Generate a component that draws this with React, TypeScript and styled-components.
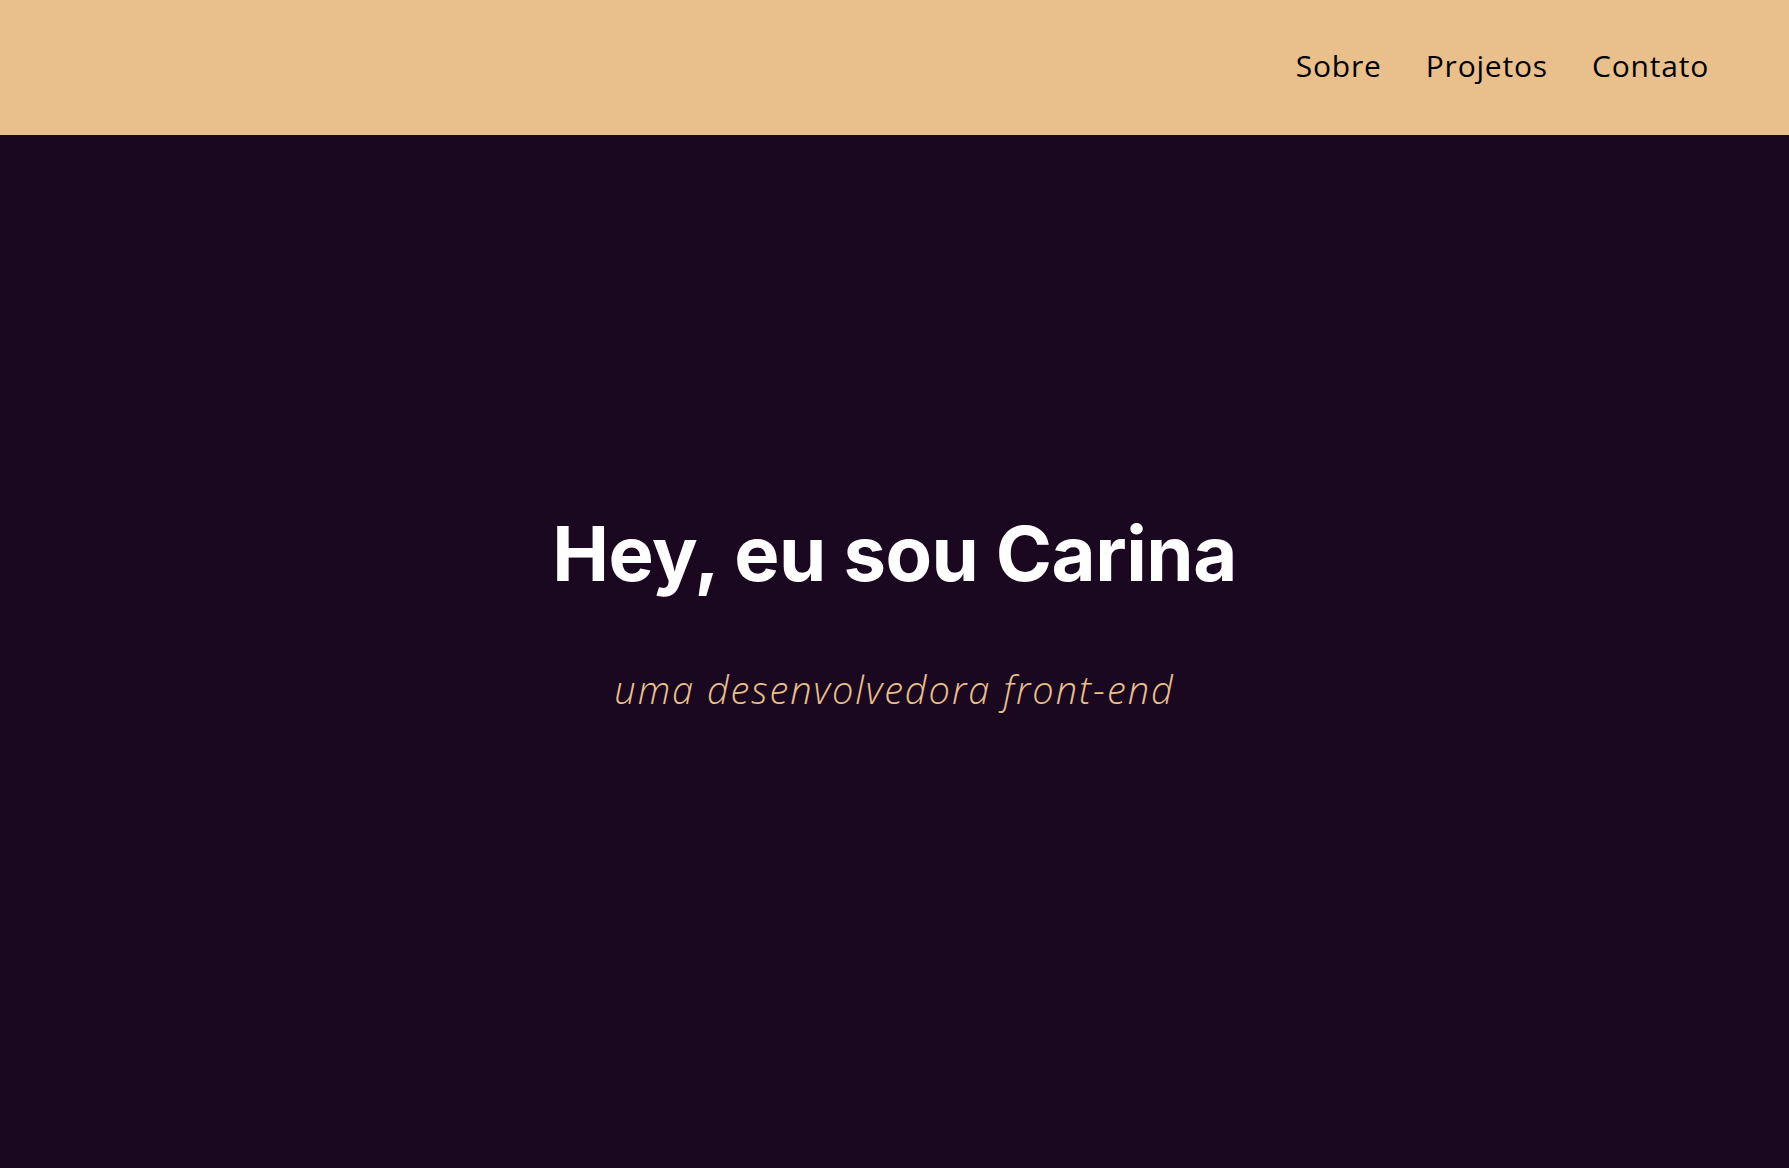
import React from "react";
import styled, { createGlobalStyle } from "styled-components";

const GlobalStyle = createGlobalStyle`
  html, body {
    margin: 0;
    padding: 0;
    background: #1a0820;
  }
  * { box-sizing: border-box; }
`;

const Page = styled.div`
  min-height: 100vh;
  background: #1a0820;
  display: flex;
  flex-direction: column;
`;

const Header = styled.header`
  height: 135px;
  background: #e9c08b;
  display: flex;
  align-items: center;
  justify-content: flex-end;
  padding: 0 80px 4px 0;
`;

const Nav = styled.nav`
  display: flex;
  gap: 44px;
`;

const NavLink = styled.a`
  font-family: "Open Sans", "Liberation Sans", sans-serif;
  font-size: 30px;
  font-weight: 400;
  letter-spacing: 0.8px;
  color: #000;
  text-decoration: none;
  line-height: 1;
`;

const Hero = styled.main`
  flex: 1;
  display: flex;
  flex-direction: column;
  align-items: center;
  padding-top: 380px;
`;

const Title = styled.h1`
  margin: 0;
  font-family: "Inter", "Lato", sans-serif;
  font-weight: 700;
  font-size: 76px;
  line-height: 1;
  color: #ffffff;
  letter-spacing: -0.5px;
`;

const Subtitle = styled.p`
  margin: 79px 0 0;
  font-family: "Open Sans", "Lato", sans-serif;
  font-weight: 300;
  font-style: italic;
  font-size: 38px;
  line-height: 1;
  letter-spacing: 1.95px;
  color: #e9c08b;
`;

export default function App() {
  return (
    <>
      <GlobalStyle />
      <Page>
        <Header>
          <Nav>
            <NavLink href="#sobre">Sobre</NavLink>
            <NavLink href="#projetos">Projetos</NavLink>
            <NavLink href="#contato">Contato</NavLink>
          </Nav>
        </Header>
        <Hero>
          <Title>Hey, eu sou Carina</Title>
          <Subtitle>uma desenvolvedora front-end</Subtitle>
        </Hero>
      </Page>
    </>
  );
}
